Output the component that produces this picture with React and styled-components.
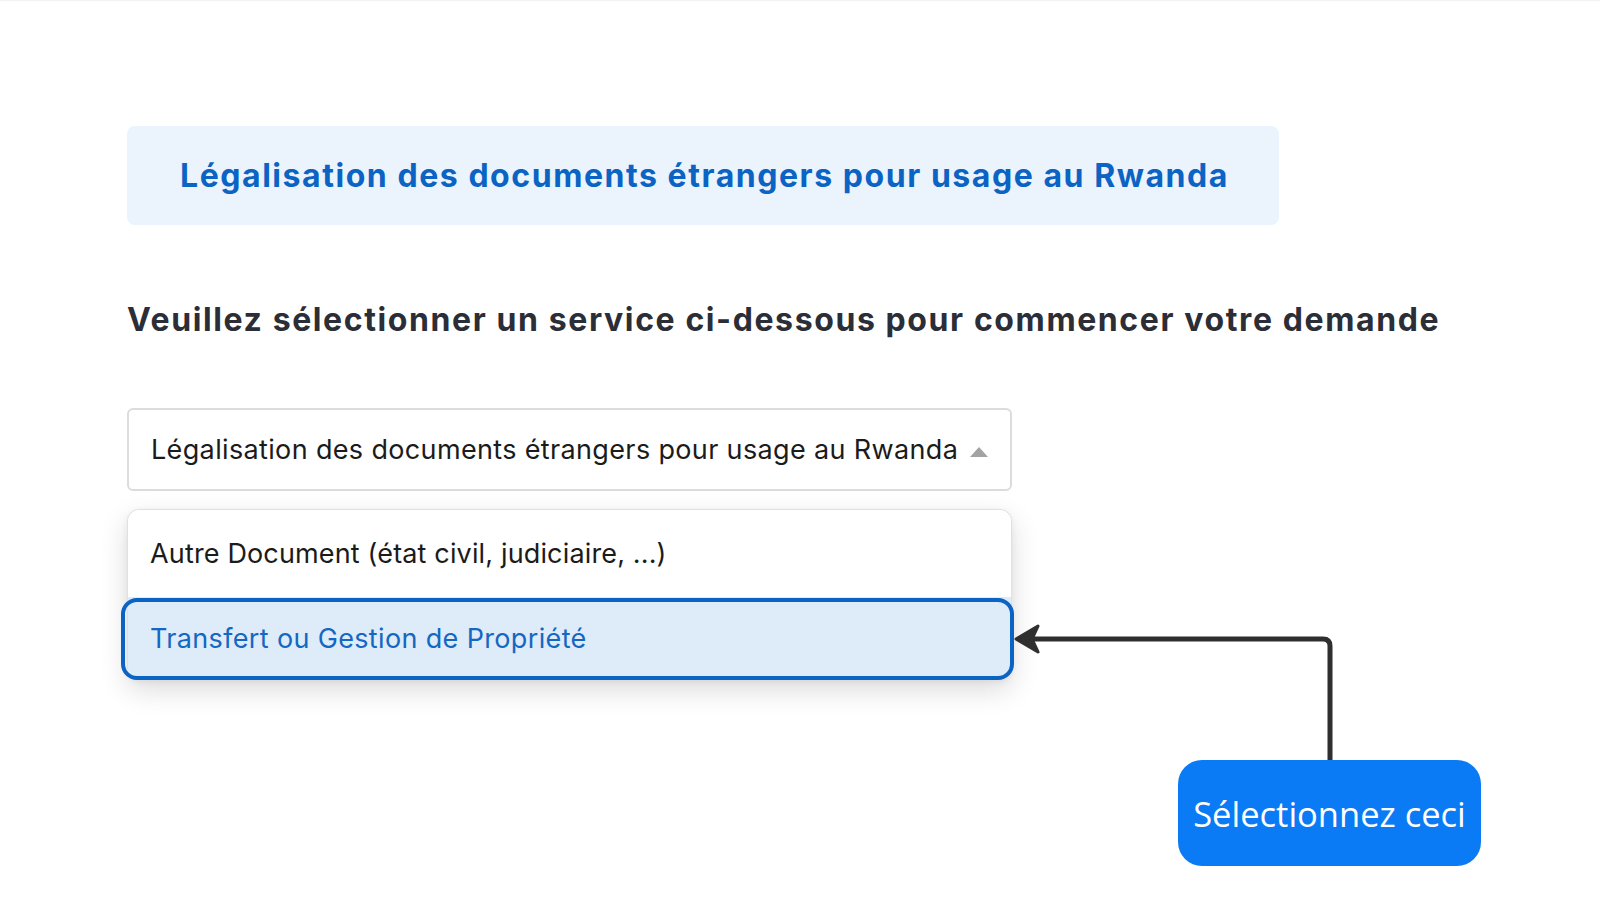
import React from "react";
import styled, { createGlobalStyle } from "styled-components";

const GlobalStyle = createGlobalStyle`
  html, body {
    margin: 0;
    padding: 0;
    background: #fff;
  }
  body {
    font-family: Inter, Lato, "Noto Sans", sans-serif;
    color: #22252d;
  }
`;

const Page = styled.main`
  position: relative;
  width: 1600px;
  height: 898px;
  overflow: hidden;
  padding: 126px 0 0 127px;
  box-sizing: border-box;
  box-shadow: inset 0 2px 2px -1px rgba(0, 0, 0, 0.06);
`;

const Banner = styled.div`
  width: 1152px;
  height: 99px;
  box-sizing: border-box;
  padding-left: 53px;
  display: flex;
  align-items: center;
  background: #ebf3fc;
  border-radius: 8px;
`;

const BannerTitle = styled.h1`
  margin: 0;
  font-size: 32px;
  font-weight: 700;
  color: #0b63c4;
  letter-spacing: 1.55px;
`;

const Prompt = styled.h2`
  margin: 75px 0 0;
  font-size: 32px;
  font-weight: 700;
  color: #2b2e36;
  letter-spacing: 1.6px;
`;

const SelectWrap = styled.div`
  width: 885px;
  margin-top: 69px;
  display: flex;
  flex-direction: column;
  gap: 18px;
`;

const SelectBox = styled.div`
  height: 83px;
  box-sizing: border-box;
  padding: 0 22px;
  display: flex;
  align-items: center;
  justify-content: space-between;
  border: 2px solid #dcdcdc;
  border-radius: 6px;
  font-size: 27px;
  letter-spacing: 0.35px;
  color: #1b1b1b;
`;

const Caret = styled.span`
  width: 0;
  height: 0;
  border-left: 9px solid transparent;
  border-right: 9px solid transparent;
  border-bottom: 10px solid #a3a3a3;
  margin-top: 4px;
`;

const Menu = styled.ul`
  list-style: none;
  margin: 0;
  padding: 0;
  border: 1px solid #e0e0e0;
  border-radius: 12px;
  box-shadow: 0 10px 28px rgba(0, 0, 0, 0.14), 0 2px 6px rgba(0, 0, 0, 0.06);
  background: #fff;
`;

const Option = styled.li`
  position: relative;
  height: ${(p) => (p.$active ? "82px" : "87px")};
  box-sizing: border-box;
  padding: 0 22px;
  display: flex;
  align-items: center;
  font-size: 27px;
  letter-spacing: ${(p) => (p.$active ? "0.35px" : "0.15px")};
  color: ${(p) => (p.$active ? "#1467c2" : "#1b1b1b")};
  background: ${(p) => (p.$active ? "#deebf8" : "#fff")};
  border-radius: ${(p) => (p.$active ? "0 0 12px 12px" : "12px 12px 0 0")};
`;

/* highlight ring drawn over the chosen option */
const Ring = styled.span`
  position: absolute;
  left: -7px;
  right: -3px;
  top: 1px;
  bottom: -1px;
  border: 4px solid #0b63c4;
  border-radius: 16px;
  pointer-events: none;
`;

const Pointer = styled.svg`
  position: absolute;
  left: 1012px;
  top: 610px;
  overflow: visible;
`;

const Hint = styled.div`
  position: absolute;
  left: 1178px;
  top: 760px;
  width: 303px;
  height: 106px;
  display: flex;
  align-items: center;
  justify-content: center;
  background: #0a7bf5;
  border-radius: 24px;
  font-family: "Open Sans", "Noto Sans", sans-serif;
  font-size: 34.5px;
  color: #fff;
`;

export default function App() {
  return (
    <>
      <GlobalStyle />
      <Page>
        <Banner>
          <BannerTitle>
            Légalisation des documents étrangers pour usage au Rwanda
          </BannerTitle>
        </Banner>
        <Prompt>
          Veuillez sélectionner un service ci-dessous pour commencer votre
          demande
        </Prompt>
        <SelectWrap>
          <SelectBox>
            <span>Légalisation des documents étrangers pour usage au Rwanda</span>
            <Caret />
          </SelectBox>
          <Menu>
            <Option>Autre Document (état civil, judiciaire, ...)</Option>
            <Option $active>
              Transfert ou Gestion de Propriété
              <Ring />
            </Option>
          </Menu>
        </SelectWrap>

        <Pointer width="330" height="160" viewBox="0 0 330 160">
          <path
            d="M318 150 V36 Q318 29 311 29 H18"
            fill="none"
            stroke="#2f2f2f"
            strokeWidth="5"
          />
          <path d="M4 29 L26 16 L20 29 L26 42 Z" fill="#2f2f2f" stroke="#2f2f2f" strokeWidth="3" strokeLinejoin="round" />
        </Pointer>
        <Hint>Sélectionnez ceci</Hint>
      </Page>
    </>
  );
}
